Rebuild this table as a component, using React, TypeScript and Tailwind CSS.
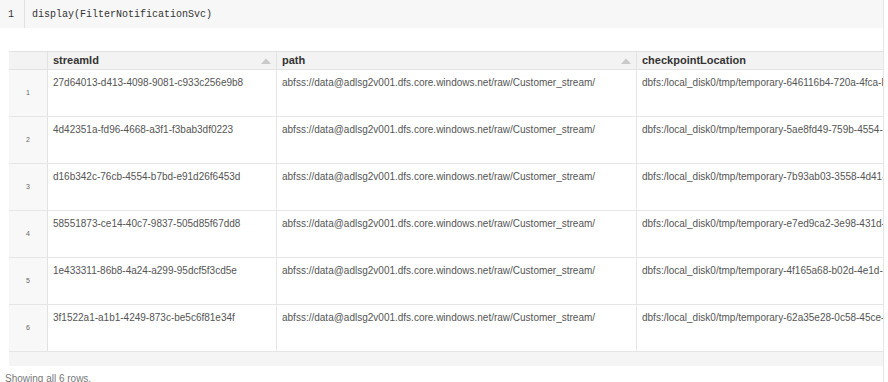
import * as React from 'react'

const rows = [
  ['27d64013-d413-4098-9081-c933c256e9b8', '646116b4-720a-4fca-b'],
  ['4d42351a-fd96-4668-a3f1-f3bab3df0223', '5ae8fd49-759b-4554-8'],
  ['d16b342c-76cb-4554-b7bd-e91d26f6453d', '7b93ab03-3558-4d41-a'],
  ['58551873-ce14-40c7-9837-505d85f67dd8', 'e7ed9ca2-3e98-431d-9'],
  ['1e433311-86b8-4a24-a299-95dcf5f3cd5e', '4f165a68-b02d-4e1d-b'],
  ['3f1522a1-a1b1-4249-873c-be5c6f81e34f', '62a35e28-0c58-45ce-a'],
]

function SortArrow() {
  return (
    <svg width="10" height="6" viewBox="0 0 10 6" className="shrink-0">
      <path d="M0 6 L5 0.5 L10 6 Z" fill="#c9c9c9" />
    </svg>
  )
}

export default function App() {
  return (
    <div className="h-[382px] w-[884px] overflow-hidden border-r border-[#e6e6e6] bg-white font-['Liberation_Sans',Arial,sans-serif]">
      <div className="flex h-[28px] items-center bg-[#f7f7f7] font-['Liberation_Mono','DejaVu_Sans_Mono',monospace] text-[10px] text-[#333]">
        <div className="flex h-[28px] w-[25px] items-center border-r border-[#e2e2e2] pl-[8px]">1</div>
        <div className="pl-[7px]">display(FilterNotificationSvc)</div>
      </div>

      <div className="ml-[9px] mt-[23px] overflow-hidden">
        <div className="w-[1200px]">
          <div className="flex h-[19px] border-y border-[#e2e2e2] bg-[#f3f3f3] text-[11px] font-bold text-[#333]">
            <div className="w-[39px] shrink-0 border-r border-[#e2e2e2]" />
            <div className="flex w-[229px] shrink-0 items-center justify-between border-r border-[#e2e2e2] pl-[5px] pr-[5px]">
              <span>streamId</span>
              <SortArrow />
            </div>
            <div className="flex w-[360px] shrink-0 items-center justify-between border-r border-[#e2e2e2] pl-[5px] pr-[5px]">
              <span>path</span>
              <SortArrow />
            </div>
            <div className="flex shrink-0 items-center pl-[5px]">
              <span>checkpointLocation</span>
            </div>
          </div>

          {rows.map((r, i) => (
            <div key={i} className="flex h-[47px] border-b border-[#e6e6e6] text-[10px] text-[#555]">
              <div className="flex w-[39px] shrink-0 items-center justify-center border-r border-[#e2e2e2] bg-[#f8f8f8] text-[7px] text-[#666]">
                {i + 1}
              </div>
              <div className="w-[229px] shrink-0 border-r border-[#e6e6e6] pl-[5px] pt-[5px]">{r[0]}</div>
              <div className="w-[360px] shrink-0 border-r border-[#e6e6e6] pl-[5px] pt-[5px]">
                abfss://data@adlsg2v001.dfs.core.windows.net/raw/Customer_stream/
              </div>
              <div className="shrink-0 whitespace-nowrap pl-[5px] pt-[5px]">
                dbfs:/local_disk0/tmp/temporary-{r[1]}
              </div>
            </div>
          ))}

          <div className="h-[14px] bg-[#f5f5f5]" />
        </div>
      </div>

      <div className="pl-[5px] pt-[5px] text-[10px] text-[#777]">Showing all 6 rows.</div>
    </div>
  )
}
